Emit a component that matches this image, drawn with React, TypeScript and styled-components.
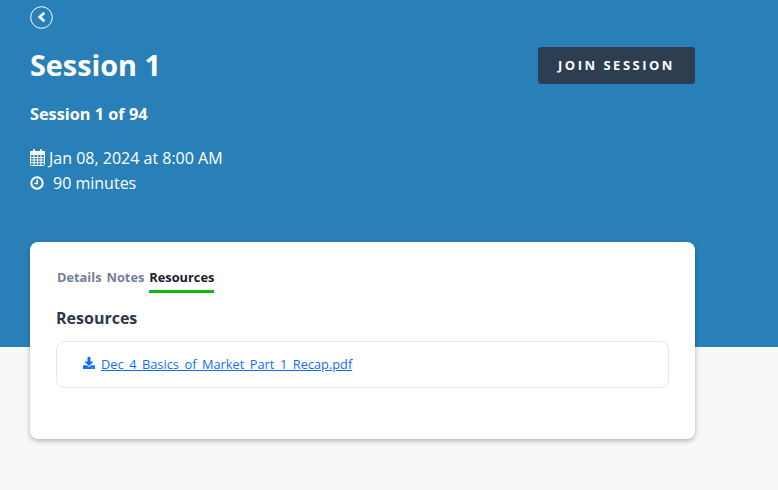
import React from "react"
import styled, { createGlobalStyle } from "styled-components"
import { FaDownload } from "react-icons/fa"

const GlobalStyle = createGlobalStyle`
  html, body {
    margin: 0;
    padding: 0;
    background: #f7f8fa;
    font-family: "Open Sans", "Liberation Sans", sans-serif;
    overflow: hidden;
  }
`

const Page = styled.div`
  width: 778px;
  height: 490px;
  overflow: hidden;
`

const Hero = styled.header`
  box-sizing: border-box;
  height: 347px;
  padding: 6px 83px 0 30px;
  background: #2980b9;
  color: #fff;
`

const BackButton = styled.a`
  display: block;
  width: 23px;
  height: 23px;
  margin-bottom: 12px;
  color: #fff;
`

const TitleRow = styled.div`
  display: flex;
  justify-content: space-between;
  align-items: center;
  height: 50px;
`

const Title = styled.h1`
  margin: -2px 0 0;
  font-size: 28.8px;
  line-height: 38px;
  font-weight: 700;
`

const JoinButton = styled.button`
  width: 157px;
  height: 37px;
  padding: 0;
  margin-top: -2px;
  border: 0;
  border-radius: 3px;
  background: #2c3e50;
  color: #fff;
  font-family: inherit;
  font-size: 13px;
  font-weight: 700;
  letter-spacing: 2.5px;
`

const Count = styled.p`
  margin: 12px 0 20px;
  font-size: 16.3px;
  line-height: 22px;
  font-weight: 700;
`

const MetaRow = styled.div<{ $gap: number }>`
  display: flex;
  align-items: center;
  gap: ${props => props.$gap}px;
  height: 25px;
  font-size: 16px;
`

const Card = styled.section`
  box-sizing: border-box;
  width: 665px;
  height: 197px;
  margin: -105px 0 0 30px;
  padding: 24px 26px 0;
  background: #fff;
  border-radius: 8px;
  box-shadow: 0 2px 5px rgba(0, 0, 0, 0.28);
`

const Tabs = styled.nav`
  display: flex;
  gap: 5px;
  margin-left: 1px;
`

const Tab = styled.span<{ $active?: boolean }>`
  box-sizing: border-box;
  height: 27px;
  padding-top: 2px;
  font-size: 12.8px;
  line-height: 18px;
  font-weight: 700;
  color: ${props => (props.$active ? "#1a202c" : "#718096")};
  border-bottom: 3px solid ${props => (props.$active ? "#0fb70f" : "transparent")};
`

const SectionTitle = styled.h2`
  margin: 14px 0 12px;
  font-size: 16px;
  line-height: 22px;
  font-weight: 700;
  color: #2d3748;
`

const ResourceRow = styled.div`
  box-sizing: border-box;
  display: flex;
  align-items: center;
  gap: 6px;
  width: 613px;
  height: 47px;
  padding-left: 26px;
  border: 1px solid #e2e8f0;
  border-radius: 8px;
`

const DownloadIcon = styled(FaDownload)`
  width: 12px;
  height: 12px;
  margin-top: -4px;
  color: #0d6efd;
`

const FileLink = styled.a`
  margin-top: -2px;
  font-size: 12.77px;
  line-height: 18px;
  color: #0d6efd;
  text-decoration: underline;
`

const CalendarIcon = () => (
  <svg width="15" height="17" viewBox="0 0 15 17" fill="none" stroke="#fff">
    <path d="M0.5 4.5h14v11a1 1 0 0 1-1 1h-12a1 1 0 0 1-1-1z" strokeWidth="1" />
    <path d="M0.5 2.5h14v3h-14z" fill="#fff" strokeWidth="1" />
    <path d="M4 1v3M11 1v3" strokeWidth="2" strokeLinecap="round" />
    <path d="M1 8.5h13M1 11h13M1 13.7h13M4 6v10M7.5 6v10M11 6v10" strokeWidth="1" />
  </svg>
)

const ClockIcon = () => (
  <svg width="14" height="14" viewBox="0 0 14 14" fill="none" stroke="#fff">
    <circle cx="7" cy="7" r="5.7" strokeWidth="2" />
    <path d="M7.2 3.6v4H4.4" strokeWidth="1.5" />
  </svg>
)

const BackIcon = () => (
  <svg width="23" height="23" viewBox="0 0 23 23" fill="none" stroke="#fff">
    <circle cx="11.5" cy="11.5" r="10.8" strokeWidth="1" />
    <path d="M14.4 6.8 9.7 11 14.4 15.2" strokeWidth="2.6" />
  </svg>
)

export default function App() {
  return (
    <Page>
      <GlobalStyle />
      <Hero>
        <BackButton href="#">
          <BackIcon />
        </BackButton>
        <TitleRow>
          <Title>Session 1</Title>
          <JoinButton>JOIN SESSION</JoinButton>
        </TitleRow>
        <Count>Session 1 of 94</Count>
        <MetaRow $gap={4}>
          <CalendarIcon />
          Jan 08, 2024 at 8:00 AM
        </MetaRow>
        <MetaRow $gap={9}>
          <ClockIcon />
          90 minutes
        </MetaRow>
      </Hero>
      <Card>
        <Tabs>
          <Tab>Details</Tab>
          <Tab>Notes</Tab>
          <Tab $active>Resources</Tab>
        </Tabs>
        <SectionTitle>Resources</SectionTitle>
        <ResourceRow>
          <DownloadIcon />
          <FileLink href="#">Dec_4_Basics_of_Market_Part_1_Recap.pdf</FileLink>
        </ResourceRow>
      </Card>
    </Page>
  )
}
